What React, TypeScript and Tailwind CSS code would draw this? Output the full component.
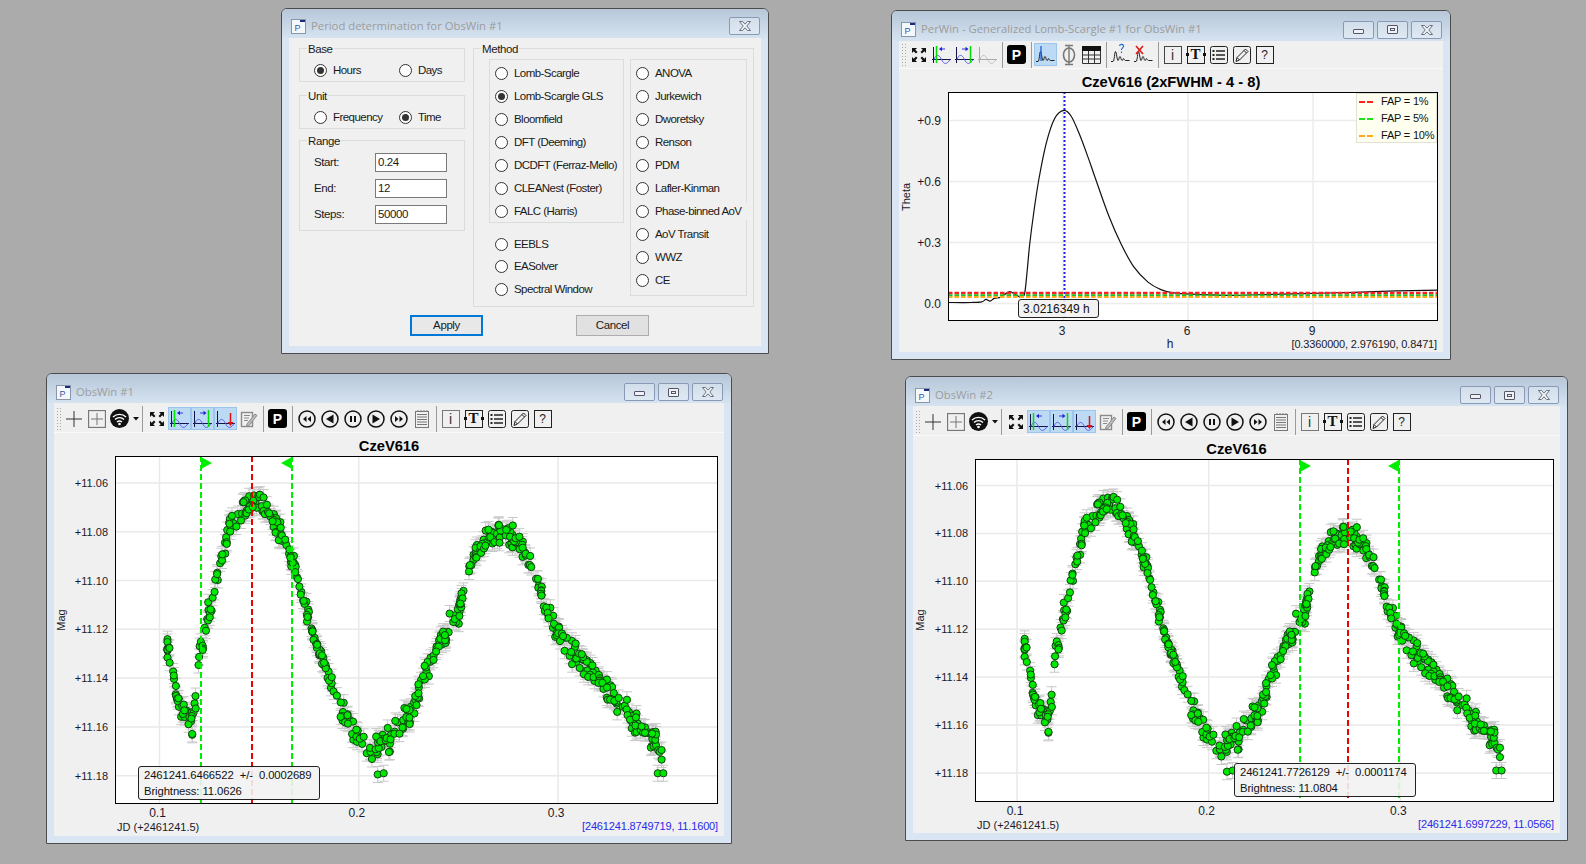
import type { ReactNode } from "react";

// ---------- light curve data ----------
const knots: [number, number][] = [
  [0.104, 11.13], [0.1065, 11.132], [0.1075, 11.142], [0.11, 11.152], [0.113, 11.156], [0.1165, 11.158],
  [0.118, 11.15], [0.12, 11.132], [0.125, 11.112], [0.13, 11.095], [0.135, 11.08], [0.14, 11.072],
  [0.146, 11.066], [0.152, 11.068], [0.16, 11.08], [0.168, 11.095], [0.172, 11.108], [0.178, 11.125],
  [0.185, 11.14], [0.192, 11.155], [0.2, 11.165], [0.207, 11.169], [0.215, 11.165], [0.225, 11.156],
  [0.235, 11.136], [0.243, 11.122], [0.25, 11.113], [0.258, 11.088], [0.265, 11.081], [0.272, 11.079],
  [0.28, 11.083], [0.287, 11.095], [0.294, 11.111], [0.305, 11.127], [0.319, 11.14], [0.33, 11.15],
  [0.339, 11.158], [0.346, 11.163], [0.353, 11.172],
];

const curveAt = (t: number) => {
  for (let i = 1; i < knots.length; i++) {
    if (t <= knots[i][0]) {
      const [a, b] = knots[i - 1];
      const [c, d] = knots[i];
      return b + ((t - a) / (c - a)) * (d - b);
    }
  }
  return knots[knots.length - 1][1];
};

const makePoints = () => {
  let seed = 616;
  const rnd = () => {
    seed = (seed + 0x6d2b79f5) | 0;
    let r = Math.imul(seed ^ (seed >>> 15), 1 | seed);
    r = (r + Math.imul(r ^ (r >>> 7), 61 | r)) ^ r;
    return ((r ^ (r >>> 14)) >>> 0) / 4294967296;
  };
  const pts: [number, number][] = [];
  let t = 0.104;
  while (t < 0.3515) {
    const n = 3 + Math.floor(rnd() * 5);
    const off = (rnd() - 0.5) * 0.005;
    for (let i = 0; i < n; i++) {
      const pt = Math.min(0.353, t + (rnd() - 0.5) * 0.01);
      pts.push([Math.max(0.104, pt), curveAt(pt) + off + (rnd() - 0.5) * 0.007]);
    }
    t += 0.0016 + rnd() * 0.0014;
  }
  pts.push([0.2095, 11.1795], [0.2125, 11.179], [0.35, 11.179], [0.3528, 11.179]);
  return pts;
};

const points = makePoints();

// ---------- toolbar icons ----------
const Fit = () => (
  <svg width="16" height="16" viewBox="0 0 16 16" fill="#111">
    <path d="M1 1h5L4.300 2.700 6.500 5 5 6.500 2.700 4.300 1 6z" />
    <path d="M15 1v5L13.300 4.300 11 6.500 9.500 5l2.200-2.300L10 1z" />
    <path d="M1 15v-5l1.700 1.700L5 9.500 6.500 11l-2.200 2.300L6 15z" />
    <path d="M15 15h-5l1.700-1.700L9.500 11 11 9.500l2.300 2.200L15 10z" />
  </svg>
);

const Wave = ({ kind }: { kind: "left" | "right" | "down" | "off" }) => {
  const axis = kind === "off" ? "#a8a8a8" : "#14144a";
  const wave = kind === "off" ? "#c0c0c0" : "#5a5af0";
  return (
    <svg width="23" height="23" viewBox="0 0 23 23" fill="none">
      <path d="M3.500 4v16M2 16.500h19" stroke={axis} />
      <path d="M4 16.500C6 11 9 11 11.500 16.500S17 21.500 20 16.500" stroke={wave} />
      {kind === "left" && (
        <>
          <path d="M6.500 3v17" stroke="#00e000" strokeWidth="1.500" />
          <path d="M10 6h5" stroke="#3030e0" />
          <path d="M9 6l3-2.200v4.400z" fill="#2020e0" />
        </>
      )}
      {kind === "right" && (
        <>
          <path d="M17.500 3v17" stroke="#00e000" strokeWidth="1.500" />
          <path d="M9 6h5" stroke="#3030e0" />
          <path d="M15.500 6l-3-2.200v4.400z" fill="#2020e0" />
        </>
      )}
      {kind === "down" && (
        <>
          <path d="M16.500 6v9" stroke="#e01010" strokeWidth="1.500" />
          <path d="M16.500 19l-3-4h6z" fill="#e01010" />
        </>
      )}
    </svg>
  );
};

const Peaks = ({ mark }: { mark?: "active" | "ask" | "cross" }) => (
  <svg width="23" height="23" viewBox="0 0 23 23" fill="none">
    <path
      d="M2 18.500h2c1.500 0 1.500-10 2.500-10s1.500 9 2.500 9 1-4 2-4 1 4 2 4 1-2 1.500-2 1 2 2 2h4"
      stroke="#222"
    />
    {mark === "active" && <path d="M7 3v15" stroke="#1a5fe0" strokeWidth="1.300" />}
    {mark === "ask" && (
      <path d="M10.500 3c.5-2.500 4.500-2 4 .5-.3 1.500-2 1.500-2 3.500M12.500 8.500v1.500" stroke="#1a6fd8" strokeWidth="1.200" />
    )}
    {mark === "cross" && <path d="M4 3l7 8M11 3l-7 8" stroke="#e01818" strokeWidth="1.600" />}
  </svg>
);

const Phi = () => (
  <svg width="20" height="22" viewBox="0 0 20 22" fill="none" stroke="#777">
    <ellipse cx="10" cy="11" rx="5.500" ry="7" strokeWidth="1.600" />
    <path d="M10 1v20M6 1.500h8M6 20.500h8" strokeWidth="1.400" />
  </svg>
);

const TableIcon = () => (
  <svg width="19" height="18" viewBox="0 0 19 18" fill="none">
    <rect x="0" y="0" width="19" height="5" fill="#111" />
    <path d="M.5 5v12.500h18V5M0 9h19M0 13h19M6.500 5v13M12.500 5v13" stroke="#333" />
  </svg>
);

const Wifi = () => (
  <svg width="19" height="19" viewBox="0 0 19 19" fill="none">
    <circle cx="9.500" cy="9.500" r="9.500" fill="#111" />
    <path d="M3 8c3.500-3.500 9.500-3.500 13 0M5 10.500c2.500-2.500 6.500-2.500 9 0M7 13c1.500-1.300 3.500-1.300 5 0" stroke="#fff" strokeWidth="1.400" />
    <circle cx="9.500" cy="15" r="1.300" fill="#fff" />
  </svg>
);

const Media = ({ kind }: { kind: "rew" | "back" | "pause" | "play" | "ff" }) => (
  <svg width="18" height="18" viewBox="0 0 18 18" fill="#111">
    <circle cx="9" cy="9" r="8" fill="none" stroke="#111" strokeWidth="1.500" />
    {kind === "rew" && <path d="M8.500 6v6L5 9zM13 6v6L9.500 9z" />}
    {kind === "back" && <path d="M12.500 4.500v9L5 9z" />}
    {kind === "pause" && <path d="M6 6h2v6H6zM10 6h2v6h-2z" />}
    {kind === "play" && <path d="M5.500 4.500v9L13 9z" />}
    {kind === "ff" && <path d="M5 6v6l3.500-3zM9.500 6v6L13 9z" />}
  </svg>
);

const Notes = () => (
  <svg width="14" height="18" viewBox="0 0 14 18" fill="none" stroke="#777">
    <rect x=".5" y="1.500" width="13" height="16" />
    <path d="M3 1v-1M6 1v-1M9 1v-1M12 1v-1M2 4.500h10M2 7h10M2 9.500h10M2 12h10M2 14.500h10" />
  </svg>
);

const NotePen = () => (
  <svg width="18" height="18" viewBox="0 0 18 18" fill="none" stroke="#8a8a8a">
    <rect x="1.500" y="2.500" width="11" height="14" strokeWidth="1.400" />
    <path d="M4 5.500h6M4 8h5M4 10.500h4" />
    <path d="M7 14l8-10 2 1.500-8 10-2.500 1z" fill="#bdbdbd" />
  </svg>
);

const Pen = () => (
  <svg width="18" height="18" viewBox="0 0 18 18" fill="none" stroke="#222">
    <rect x=".5" y=".5" width="17" height="17" rx="2" />
    <path d="M3 15.500l1-4L12.500 3l2.500 2.500L6.500 14zM4 11.500l2.500 2.500M11 4.500l2.500 2.500" />
  </svg>
);

const ListIcon = () => (
  <svg width="18" height="18" viewBox="0 0 18 18" fill="none" stroke="#222">
    <rect x=".5" y=".5" width="17" height="17" rx="2" />
    <path d="M6 5h9M6 9h9M6 13h9" strokeWidth="1.500" />
    <path d="M2.500 5h2M2.500 9h2M2.500 13h2" strokeWidth="2" />
  </svg>
);

const Letter = ({ children, className }: { children: ReactNode; className: string }) => (
  <div className={`flex h-[18px] w-[18px] items-center justify-center border leading-none ${className}`}>{children}</div>
);

const InfoBox = ({ dark }: { dark?: boolean }) => (
  <Letter className={dark ? "border-[#444] text-[14px] text-[#333]" : "border-[#777] text-[14px] text-[#333]"}>i</Letter>
);

const TBox = () => (
  <div className="relative">
    <Letter className="border-[#222] [font-family:'Liberation_Serif',serif] text-[15px] font-bold text-[#111]">T</Letter>
    <span className="absolute -left-[1px] top-[7px] h-[3px] w-[3px] bg-[#111]" />
    <span className="absolute -right-[1px] top-[7px] h-[3px] w-[3px] bg-[#111]" />
  </div>
);

const Ask = () => <Letter className="border-[#222] text-[12px] text-[#222]">?</Letter>;

const PBox = () => (
  <div className="flex h-[19px] w-[19px] items-center justify-center rounded-[3px] bg-black text-[14px] font-bold leading-none text-white">
    P
  </div>
);

const Btn = ({ active, children }: { active?: boolean; children: ReactNode }) => (
  <div
    className={`flex h-[23px] w-[23px] shrink-0 items-center justify-center ${
      active ? "bg-[#bcdaf4] outline-1 -outline-offset-1 outline-[#9ac6ee]" : ""
    }`}
  >
    {children}
  </div>
);

const Sep = () => (
  <div className="flex h-[26px] w-[6px] shrink-0 justify-center">
    <div className="h-full w-px bg-[#9a9a9a]" />
  </div>
);

const Toolbar = ({ className, children }: { className: string; children: ReactNode }) => (
  <div className={`flex shrink-0 items-center border-b border-[#fafafa] pl-[2px] ${className}`}>
    <div className="mr-[1px] h-[24px] w-[5px] shrink-0 bg-[radial-gradient(circle,#a8a8a8_1px,transparent_1px)] bg-[length:3px_3px]" />
    {children}
  </div>
);

const ObsTools = () => (
  <Toolbar className="h-[30px] pt-[2px]">
    <Btn>
      <svg width="18" height="18" viewBox="0 0 18 18" stroke="#333"><path d="M9 1v16M1 9h16" /></svg>
    </Btn>
    <Btn>
      <svg width="18" height="18" viewBox="0 0 18 18" fill="none" stroke="#777"><rect x=".5" y=".5" width="17" height="17" strokeWidth="1.300" /><path d="M9 3v12M3 9h12" /></svg>
    </Btn>
    <div className="flex h-[23px] w-[31px] shrink-0 items-center pl-[2px]">
      <Wifi />
      <svg className="ml-[4px]" width="6" height="4" viewBox="0 0 6 4" fill="#111"><path d="M0 0h6L3 3.500z" /></svg>
    </div>
    <Sep />
    <Btn><Fit /></Btn>
    <Btn active><Wave kind="left" /></Btn>
    <Btn active><Wave kind="right" /></Btn>
    <Btn active><Wave kind="down" /></Btn>
    <Btn><NotePen /></Btn>
    <Sep />
    <Btn><PBox /></Btn>
    <Sep />
    <Btn><Media kind="rew" /></Btn>
    <Btn><Media kind="back" /></Btn>
    <Btn><Media kind="pause" /></Btn>
    <Btn><Media kind="play" /></Btn>
    <Btn><Media kind="ff" /></Btn>
    <Btn><Notes /></Btn>
    <Sep />
    <Btn><InfoBox /></Btn>
    <Btn><TBox /></Btn>
    <Btn><ListIcon /></Btn>
    <Btn><Pen /></Btn>
    <Btn><Ask /></Btn>
  </Toolbar>
);

const PerTools = () => (
  <Toolbar className="h-[28px]">
    <Btn><Fit /></Btn>
    <Btn><Wave kind="left" /></Btn>
    <Btn><Wave kind="right" /></Btn>
    <Btn><Wave kind="off" /></Btn>
    <Sep />
    <Btn><PBox /></Btn>
    <Sep />
    <Btn active><Peaks mark="active" /></Btn>
    <Btn><Phi /></Btn>
    <Btn><TableIcon /></Btn>
    <Sep />
    <Btn><Peaks mark="ask" /></Btn>
    <Btn><Peaks mark="cross" /></Btn>
    <Sep />
    <Btn><InfoBox dark /></Btn>
    <Btn><TBox /></Btn>
    <Btn><ListIcon /></Btn>
    <Btn><Pen /></Btn>
    <Btn><Ask /></Btn>
  </Toolbar>
);

// ---------- window chrome ----------
const AppIcon = () => (
  <svg width="15" height="15" viewBox="0 0 15 15" className="shrink-0">
    <rect x=".5" y=".5" width="14" height="14" fill="#f4f7fb" stroke="#8796a8" />
    <rect x="9" y="1" width="5" height="2" fill="#1a2a80" />
    <text x="3.500" y="11.500" fontSize="9" fill="#2a60b0">P</text>
  </svg>
);

const CapBtn = ({ kind }: { kind: "min" | "max" | "close" }) => (
  <div className="flex h-[18px] w-[31px] items-center justify-center rounded-[2px] border border-[#8a9ab4] bg-gradient-to-b from-[#d2deea] to-[#dfe9f4]">
    {kind === "min" && <div className="mt-[3px] h-[5px] w-[11px] rounded-[1px] border border-[#556] bg-[#eef2f6]" />}
    {kind === "max" && (
      <div className="flex h-[9px] w-[11px] items-center justify-center rounded-[1px] border border-[#556] bg-[#eef2f6]">
        <div className="h-[3px] w-[5px] border border-[#556]" />
      </div>
    )}
    {kind === "close" && (
      <svg width="12" height="10" viewBox="0 0 12 10" fill="#f2f5f8" stroke="#5a6472" strokeWidth=".9">
        <path d="M.5.5h3L6 3.200 8.500.5h3L7.800 5l3.700 4.500h-3L6 6.800 3.500 9.500h-3L4.200 5z" />
      </svg>
    )}
  </div>
);

const Window = ({
  title,
  className,
  barClass,
  dialog,
  children,
}: {
  title: string;
  className: string;
  barClass: string;
  dialog?: boolean;
  children: ReactNode;
}) => (
  <div className={`absolute flex flex-col rounded-t-[6px] border border-[#4c4c4c] bg-[#d9e5f2] ${className}`}>
    <div className={`flex shrink-0 items-center rounded-t-[5px] bg-gradient-to-b from-[#b7c7d8] to-[#d5e3f1] pl-[9px] pr-[8px] ${barClass}`}>
      <AppIcon />
      <span className="ml-[5px] flex-1 [font-family:'Open_Sans',sans-serif] text-[11.3px] text-[#9c9c9c]">{title}</span>
      <div className="flex gap-[3px]">
        {!dialog && <CapBtn kind="min" />}
        {!dialog && <CapBtn kind="max" />}
        <CapBtn kind="close" />
      </div>
    </div>
    <div className="mx-[7px] mb-[7px] flex min-h-0 flex-1 flex-col bg-[#f0f0f0]">{children}</div>
  </div>
);

const Tip = ({ className, lines }: { className: string; lines: string[] }) => (
  <div className={`absolute whitespace-pre rounded-[3px] border border-[#222] bg-[#f2f2f2]/90 leading-[16px] text-[#111] ${className}`}>
    {lines.map((l) => (
      <div key={l}>{l}</div>
    ))}
  </div>
);

// ---------- light curve plot ----------
type PlotCfg = {
  left: number;
  top: number;
  width: number;
  height: number;
  frame: [number, number, number, number];
  x1: number;
  xStep: number;
  y6: number;
  yStep: number;
  green: [number, number];
  red: number;
  magX: number;
  readout: string;
};

const ObsPlot = ({ cfg }: { cfg: PlotCfg }) => {
  const [fx0, fy0, fx1, fy1] = cfg.frame;
  const px = (t: number) => cfg.x1 + ((t - 0.1) / 0.1) * cfg.xStep;
  const py = (m: number) => cfg.y6 + ((m - 11.06) / 0.02) * cfg.yStep;
  const mags = [11.06, 11.08, 11.1, 11.12, 11.14, 11.16, 11.18];
  const ticks = [0.1, 0.2, 0.3];
  return (
    <svg
      width={cfg.width}
      height={cfg.height}
      viewBox={`${cfg.left} ${cfg.top} ${cfg.width} ${cfg.height}`}
      className="shrink-0 text-[11px]"
    >
      <rect x={fx0} y={fy0} width={fx1 - fx0} height={fy1 - fy0} fill="#fff" />
      {ticks.map((t) => (
        <path key={t} d={`M${px(t)} ${fy0}V${fy1}`} stroke="#e9e9e9" strokeWidth="1.500" />
      ))}
      {mags.map((m) => (
        <path key={m} d={`M${fx0} ${py(m)}H${fx1}`} stroke="#e9e9e9" strokeWidth="1.500" />
      ))}
      {points.map(([t, m], i) => {
        const x = px(t);
        const y = py(m);
        return (
          <path key={i} d={`M${x} ${y - 8}V${y + 8}M${x - 5} ${y - 8}h10M${x - 5} ${y + 8}h10`} stroke="#c8c8c8" fill="none" />
        );
      })}
      {points.map(([t, m], i) => (
        <circle key={i} cx={px(t)} cy={py(m)} r="3.600" fill="#00e800" stroke="#123f14" strokeWidth="1" />
      ))}
      {cfg.green.map((g) => (
        <path key={g} d={`M${g} ${fy0}V${fy1}`} stroke="#00ee00" strokeWidth="2" strokeDasharray="6 3" />
      ))}
      <path d={`M${cfg.green[0]} ${fy0 + 1}v12l11-6z`} fill="#00ee00" />
      <path d={`M${cfg.green[1]} ${fy0 + 1}v12l-11-6z`} fill="#00ee00" />
      <path d={`M${cfg.red} ${fy0}V${fy1}`} stroke="#f00000" strokeWidth="2" strokeDasharray="6 3" />
      <rect x={fx0 + 0.5} y={fy0 + 0.5} width={fx1 - fx0 - 1} height={fy1 - fy0 - 1} fill="none" stroke="#000" />
      {mags.map((m) => (
        <text key={m} x={fx0 - 7} y={py(m) + 4} textAnchor="end" fill="#1a1a2a">
          {`+${m.toFixed(2)}`}
        </text>
      ))}
      {ticks.map((t) => (
        <text key={t} x={px(t) - 2} y={fy1 + 13} textAnchor="middle" fill="#1a1a2a" fontSize="12">
          {t.toFixed(1)}
        </text>
      ))}
      <text x={fx0 + 2} y={fy1 + 27} fill="#1a1a2a">JD (+2461241.5)</text>
      <text x={fx1} y={fy1 + 26} textAnchor="end" fill="#2a2ae8" letterSpacing="-0.15">{cfg.readout}</text>
      <text transform={`translate(${cfg.magX} 620) rotate(-90)`} textAnchor="middle" fill="#1a1a2a">Mag</text>
    </svg>
  );
};

// ---------- periodogram plot ----------
const perKnots: [number, number][] = [
  [0.24, 0.005], [0.8, 0.005], [1.05, 0.008], [1.15, 0.02], [1.25, 0.012], [1.35, 0.025], [1.5, 0.03],
  [1.6, 0.045], [1.73, 0.058], [1.85, 0.045], [2.0, 0.03], [2.08, 0.05], [2.14, 0.16], [2.2, 0.29],
  [2.3, 0.45], [2.42, 0.61], [2.6, 0.79], [2.8, 0.91], [3.02, 0.95], [3.2, 0.92], [3.4, 0.83], [3.6, 0.72],
  [3.77, 0.62], [4.1, 0.43], [4.4, 0.29], [4.7, 0.18], [5.04, 0.105], [5.35, 0.068], [5.65, 0.052], [6.2, 0.045],
  [7, 0.04], [8, 0.045], [9, 0.05], [10, 0.055], [11, 0.062], [12, 0.066],
];

const perX = (h: number) => 1063 + (h - 3) * 41.67;
const perY = (v: number) => 303.5 - v * 203.3;

const perPath = () => {
  const p = perKnots.map(([h, v]) => [perX(h), perY(v)]);
  let d = `M${p[0][0]} ${p[0][1]}`;
  for (let i = 0; i < p.length - 1; i++) {
    const a = p[Math.max(0, i - 1)];
    const b = p[i];
    const c = p[i + 1];
    const e = p[Math.min(p.length - 1, i + 2)];
    d += `C${b[0] + (c[0] - a[0]) / 6} ${b[1] + (c[1] - a[1]) / 6} ${c[0] - (e[0] - b[0]) / 6} ${c[1] - (e[1] - b[1]) / 6} ${c[0]} ${c[1]}`;
  }
  return d;
};

const legend = [
  { label: "FAP = 1%", color: "#ff2020" },
  { label: "FAP = 5%", color: "#20e020" },
  { label: "FAP = 10%", color: "#ffa820" },
];

const PerPlot = () => (
  <svg width="544" height="260" viewBox="899 92 544 260" className="shrink-0 text-[11px]">
    <rect x="948" y="92" width="490" height="229" fill="#fff" />
    {[3, 6, 9].map((h) => (
      <path key={h} d={`M${perX(h)} 92V321`} stroke="#ececec" strokeWidth="1.500" />
    ))}
    {[0, 0.3, 0.6, 0.9].map((v) => (
      <path key={v} d={`M948 ${perY(v)}H1438`} stroke="#ececec" strokeWidth="1.500" />
    ))}
    <path d="M1064.500 92V321" stroke="#2020f0" strokeWidth="2" strokeDasharray="2 2" />
    <path d={perPath()} fill="none" stroke="#111" strokeWidth="1.200" />
    <path d="M948 293H1438" stroke="#ff2020" strokeWidth="2.400" strokeDasharray="4.500 2" />
    <path d="M948 295.300H1438" stroke="#20c020" strokeWidth="2.200" strokeDasharray="4.500 2" />
    <path d="M948 297H1438" stroke="#ffa820" strokeWidth="2.200" strokeDasharray="4.500 2" />
    <rect x="948.500" y="92.500" width="489" height="228" fill="none" stroke="#000" />
    <rect x="1356.500" y="93.500" width="80" height="49" fill="#fffff0" stroke="#e2e2d4" />
    {legend.map((l, i) => (
      <g key={l.label}>
        <path d={`M1359 ${102 + i * 17}h15`} stroke={l.color} strokeWidth="2" strokeDasharray="6 2" />
        <text x="1381" y={105 + i * 17} fill="#111" letterSpacing="-0.2">{l.label}</text>
      </g>
    ))}
    {[
      ["+0.9", 0.9],
      ["+0.6", 0.6],
      ["+0.3", 0.3],
      ["0.0", 0],
    ].map(([s, v]) => (
      <text key={s} x="941" y={perY(v as number) + 4} textAnchor="end" fill="#1a1a2a" fontSize="12">{s}</text>
    ))}
    {[3, 6, 9].map((h) => (
      <text key={h} x={perX(h) - 1} y="335" textAnchor="middle" fill="#1a1a2a" fontSize="12">{h}</text>
    ))}
    <text x="1170" y="348" textAnchor="middle" fill="#1a1a2a" fontSize="12">h</text>
    <text x="1437" y="348" textAnchor="end" fill="#1a1a2a" letterSpacing="-0.15">[0.3360000, 2.976190, 0.8471]</text>
    <text transform="translate(910 197) rotate(-90)" textAnchor="middle" fill="#1a1a2a">Theta</text>
  </svg>
);

// ---------- period dialog ----------
const Radio = ({ label, on, className = "" }: { label: string; on?: boolean; className?: string }) => (
  <div className={`flex items-center gap-[6px] whitespace-nowrap text-[11.5px] leading-none tracking-[-0.55px] text-[#1a1a1a] ${className}`}>
    <div className="flex h-[13px] w-[13px] shrink-0 items-center justify-center rounded-full border border-[#333] bg-white">
      {on && <div className="h-[7px] w-[7px] rounded-full bg-[#333]" />}
    </div>
    {label}
  </div>
);

const Group = ({ label, className, children }: { label: string; className: string; children?: ReactNode }) => (
  <div className={`relative shrink-0 border border-[#dcdcdc] ${className}`}>
    <span className="absolute -top-[7px] left-[7px] bg-[#f0f0f0] px-[1px] text-[11.5px] leading-[14px] tracking-[-0.4px] text-[#1a1a1a]">{label}</span>
    {children}
  </div>
);

const RangeRow = ({ label, value }: { label: string; value: string }) => (
  <div className="flex h-[19px] items-center pl-[14px] text-[11.5px] tracking-[-0.4px] text-[#1a1a1a]">
    <span className="w-[61px]">{label}</span>
    <div className="flex h-[19px] w-[72px] items-center border border-[#7a7a7a] bg-white pl-[2px]">{value}</div>
  </div>
);

const leftMethods = ["Lomb-Scargle", "Lomb-Scargle GLS", "Bloomfield", "DFT (Deeming)", "DCDFT (Ferraz-Mello)", "CLEANest (Foster)", "FALC (Harris)"];
const rightMethods = ["ANOVA", "Jurkewich", "Dworetsky", "Renson", "PDM", "Lafler-Kinman"];
const lastMethods = ["AoV Transit", "WWZ", "CE"];

const Dialog = () => (
  <Window title="Period determination for ObsWin #1" dialog barClass="h-[29px] pt-[5px]" className="left-[281px] top-[8px] h-[346px] w-[488px]">
    <div className="flex gap-[8px] pl-[10px] pt-[10px]">
      <div className="flex w-[166px] shrink-0 flex-col">
        <Group label="Base" className="h-[34px]">
          <div className="flex pl-[14px] pt-[15px]">
            <Radio label="Hours" on className="w-[85px]" />
            <Radio label="Days" />
          </div>
        </Group>
        <Group label="Unit" className="mt-[13px] h-[34px]">
          <div className="flex pl-[14px] pt-[15px]">
            <Radio label="Frequency" className="w-[85px]" />
            <Radio label="Time" on />
          </div>
        </Group>
        <Group label="Range" className="mt-[11px] h-[91px]">
          <div className="flex flex-col gap-[7px] pt-[12px]">
            <RangeRow label="Start:" value="0.24" />
            <RangeRow label="End:" value="12" />
            <RangeRow label="Steps:" value="50000" />
          </div>
        </Group>
      </div>
      <Group label="Method" className="h-[259px] w-[281px]">
        <div className="flex gap-[6px] pl-[15px] pt-[10px]">
          <div className="w-[135px] shrink-0">
            <div className="h-[164px] border border-[#dcdcdc] pl-[5px] pt-[2px]">
              {leftMethods.map((m) => (
                <Radio key={m} label={m} on={m === "Lomb-Scargle GLS"} className="h-[23px]" />
              ))}
            </div>
            <div className="pl-[6px] pt-[10px]">
              {["EEBLS", "EASolver", "Spectral Window"].map((m) => (
                <Radio key={m} label={m} className="h-[22.5px]" />
              ))}
            </div>
          </div>
          <div className="h-[237px] w-[117px] shrink-0 border border-[#dcdcdc] pl-[5px] pt-[2px]">
            {rightMethods.map((m) => (
              <Radio key={m} label={m} className="h-[23px]" />
            ))}
            <Radio label="Phase-binned AoV" className="relative -mr-[2px] my-[3px] h-[17px] bg-[#f0f0f0]" />
            {lastMethods.map((m) => (
              <Radio key={m} label={m} className="h-[23px]" />
            ))}
          </div>
        </div>
      </Group>
    </div>
    <div className="flex pl-[121px] pt-[8px] text-[11.5px] tracking-[-0.4px] text-[#1a1a1a]">
      <div className="flex h-[21px] w-[73px] items-center justify-center border-2 border-[#0078d7] bg-[#e8e8e8]">Apply</div>
      <div className="ml-[93px] flex h-[21px] w-[73px] items-center justify-center border border-[#adadad] bg-[#e1e1e1]">Cancel</div>
    </div>
  </Window>
);

const PlotTitle = ({ children }: { children: ReactNode }) => (
  <div className="h-[23px] shrink-0 text-center text-[14.7px] font-bold leading-[26px] text-black">{children}</div>
);

export default function App() {
  return (
    <div className="relative h-[864px] w-[1586px] overflow-hidden bg-[#ababab] [font-family:'Liberation_Sans',sans-serif]">
      <Dialog />

      <Window title="PerWin - Generalized Lomb-Scargle #1 for ObsWin #1" barClass="h-[30px] pt-[7px]" className="left-[891px] top-[10px] h-[350px] w-[560px]">
        <PerTools />
        <PlotTitle>CzeV616 (2xFWHM - 4 - 8)</PlotTitle>
        <PerPlot />
        <Tip className="left-[126px] top-[288px] h-[19px] w-[81px] pl-[4px] text-[12px] leading-[18px]" lines={["3.0216349 h"]} />
      </Window>

      <Window title="ObsWin #1" barClass="h-[29px] pt-[7px]" className="left-[46px] top-[373px] h-[471px] w-[686px]">
        <ObsTools />
        <PlotTitle>CzeV616</PlotTitle>
        <ObsPlot
          cfg={{
            left: 54,
            top: 456,
            width: 670,
            height: 380,
            frame: [115, 456, 718, 804],
            x1: 159.5,
            xStep: 199.3,
            y6: 483,
            yStep: 48.78,
            green: [201, 292],
            red: 252,
            magX: 65,
            readout: "[2461241.8749719, 11.1600]",
          }}
        />
        <Tip
          className="left-[91px] top-[392px] h-[34px] w-[182px] pl-[5px] text-[11.3px] tracking-[-0.1px]"
          lines={["2461241.6466522  +/-  0.0002689", "Brightness: 11.0626"]}
        />
      </Window>

      <Window title="ObsWin #2" barClass="h-[29px] pt-[7px]" className="left-[905px] top-[376px] h-[465px] w-[663px]">
        <ObsTools />
        <PlotTitle>CzeV616</PlotTitle>
        <ObsPlot
          cfg={{
            left: 913,
            top: 459,
            width: 647,
            height: 374,
            frame: [975, 459, 1554, 802],
            x1: 1017,
            xStep: 191.7,
            y6: 485.5,
            yStep: 47.9,
            green: [1300, 1399],
            red: 1348,
            magX: 924,
            readout: "[2461241.6997229, 11.0566]",
          }}
        />
        <Tip
          className="left-[328px] top-[386px] h-[34px] w-[182px] pl-[5px] text-[11.3px] tracking-[-0.1px]"
          lines={["2461241.7726129  +/-  0.0001174", "Brightness: 11.0804"]}
        />
      </Window>
    </div>
  );
}
